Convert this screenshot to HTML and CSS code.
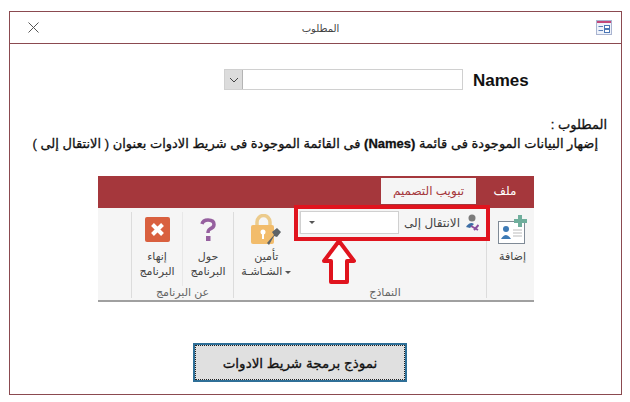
FILE: index.html
```html
<!DOCTYPE html>
<html lang="ar">
<head>
    <meta charset="UTF-8">
    <title>المطلوب</title>
    <link rel="stylesheet" href="styles.css">
</head>
<body>
    <div class="window">
        <div class="title-bar">
            <svg class="close-icon" width="11" height="11" viewBox="0 0 11 11"><path d="M0.5 0.5 L10.5 10.5 M10.5 0.5 L0.5 10.5" stroke="#555" stroke-width="1" fill="none"/></svg>
            <span class="title-text">المطلوب</span>
            <svg class="form-icon" width="16" height="15" viewBox="0 0 16 15">
                <rect x="0.5" y="0.5" width="15" height="14" fill="#eef2fa" stroke="#aab4d0"/>
                <rect x="1" y="1" width="14" height="2" fill="#c2477a"/>
                <path d="M2.5 6.5H7M2.5 10.5H7" stroke="#5b7fb8"/>
                <rect x="8.5" y="5.5" width="5" height="3" fill="#fff" stroke="#4a76b5"/>
                <rect x="8.5" y="9.5" width="5" height="3" fill="#fff" stroke="#4a76b5"/>
            </svg>
        </div>

        <div class="form-body">
            <div class="names-row">
                <div class="combo">
                    <span class="combo-btn"><svg width="10" height="6" viewBox="0 0 10 6"><path d="M1 1 L5 5 L9 1" stroke="#444" fill="none"/></svg></span>
                    <span class="combo-input"></span>
                </div>
                <span class="names-label">Names</span>
            </div>

            <div class="notes" dir="rtl">
                <p class="notes-head">المطلوب :</p>
                <p>إضهار البيانات الموجودة فى قائمة <b>(Names)</b> فى القائمة الموجودة فى شريط الادوات بعنوان ( الانتقال إلى )</p>
            </div>

            <div class="ribbon" dir="rtl">
                <div class="tabs">
                    <span class="tab">ملف</span>
                    <span class="tab tab-active">تبويب التصميم</span>
                </div>
                <div class="panel">
                    <div class="group group-add">
                        <div class="group-items">
                            <div class="tool">
                                <span class="tool-icon">
                                    <svg width="30" height="29" viewBox="0 0 30 29">
                                        <rect x="0.5" y="6.5" width="26" height="22" fill="#fff" stroke="#7f8a96"/>
                                        <circle cx="8" cy="14" r="3" fill="#3d7ab5"/>
                                        <path d="M3 24 q5 -8 10 0z" fill="#3d7ab5"/>
                                        <path d="M15 15H24M15 18H24M15 21H24" stroke="#bbb"/>
                                        <path d="M20 0H24V4H29V8H24V12H20V8H16V4H20Z" fill="#6fae9c"/>
                                    </svg>
                                </span>
                                <span class="tool-label">إضافة</span>
                            </div>
                        </div>
                    </div>
                    <div class="group group-forms">
                        <div class="group-items">
                            <div class="goto">
                                <svg width="14" height="18" viewBox="0 0 14 18">
                                    <circle cx="7" cy="4" r="3.5" fill="#7c7c7c"/>
                                    <path d="M1 13 q4 -6 8 -3 l-4 4z" fill="#3d6ea5"/>
                                    <path d="M6 12 L13 16 M9 16 L13.5 11" stroke="#8a4f9e" stroke-width="2" fill="none"/>
                                </svg>
                                <span class="goto-label">الانتقال إلى</span>
                                <span class="goto-box"><span class="caret"></span></span>
                            </div>
                            <div class="tool tool-lock">
                                <span class="tool-icon">
                                    <svg width="32" height="31" viewBox="0 0 32 31">
                                        <path d="M7 12 V8 a6.500 6.500 0 0 1 13 0 V12" stroke="#eccb8c" stroke-width="3.500" fill="none"/>
                                        <rect x="1" y="11" width="23" height="19" rx="2" fill="#f2bc6b"/>
                                        <circle cx="13" cy="18" r="2.500" fill="#fff"/>
                                        <rect x="12" y="19" width="2" height="6" fill="#fff"/>
                                        <path d="M17 29 L24 21 L22 18 L27 14 L31 18 L27 23 L24 22 L19 31Z" fill="#5f6468"/>
                                    </svg>
                                </span>
                                <span class="tool-label">تأمين<br><span class="tiny-caret"></span> الشـاشـة</span>
                            </div>
                        </div>
                        <div class="group-name group-name-forms">النماذج</div>
                    </div>
                    <div class="group group-about">
                        <div class="group-items">
                            <div class="tool tool-help">
                                <span class="tool-icon">
                                    <svg width="16" height="23" viewBox="0 0 16 23">
                                        <path d="M2 6 q1 -4 6 -4 q6 0 6 4.500 q0 3 -4 4.500 q-2 1 -2 4" stroke="#96609f" stroke-width="3.500" fill="none"/>
                                        <rect x="6" y="18" width="4.500" height="5" fill="#96609f"/>
                                    </svg>
                                </span>
                                <span class="tool-label">حول<br>البرنامج</span>
                            </div>
                            <div class="tool tool-exit">
                                <span class="tool-icon">
                                    <svg width="25" height="25" viewBox="0 0 25 25">
                                        <rect width="25" height="25" rx="2" fill="#d9603f"/>
                                        <path d="M7.500 7.500 L17.500 17.500 M17.500 7.500 L7.500 17.500" stroke="#fff" stroke-width="4"/>
                                    </svg>
                                </span>
                                <span class="tool-label">إنهاء<br>البرنامج</span>
                            </div>
                        </div>
                        <div class="group-name">عن البرنامج</div>
                    </div>
                </div>
                <div class="highlight"></div>
                <svg class="arrow" width="36" height="48" viewBox="0 0 36 48">
                    <path d="M18 4 L33 24 H26 V45 H10 V24 H3 Z" fill="#fff" stroke="#e0141e" stroke-width="4" stroke-linejoin="round"/>
                </svg>
            </div>

            <div class="action-row">
                <button class="action-button">نموذج برمجة شريط الادوات</button>
            </div>
        </div>
    </div>
</body>
</html>
```

FILE: styles.css
```css
body {
    margin: 0;
    background-color: #fff;
    font-family: "Liberation Sans", "DejaVu Sans", sans-serif;
    color: #111;
}
.window {
    box-sizing: border-box;
    width: 613px;
    height: 384px;
    margin: 11px 0 0 9px;
    border: 1px solid #8b4a50;
    display: flex;
    flex-direction: column;
}
.title-bar {
    height: 31px;
    flex: none;
    border-bottom: 1px solid #8b4a50;
    display: flex;
    align-items: center;
    justify-content: space-between;
    padding: 0 9px 0 18px;
}
.title-text {
    font-size: 10px;
    color: #444;
    margin: 2px 0 0 6px;
}
.form-body {
    flex: 1;
    display: flex;
    flex-direction: column;
}
.names-row {
    display: flex;
    align-items: center;
    margin: 25px 0 0 214px;
    height: 21px;
}
.combo {
    width: 239px;
    height: 21px;
    box-sizing: border-box;
    border: 1px solid #d0d0d0;
    display: flex;
}
.combo-btn {
    width: 17px;
    background-color: #dcdcdc;
    border-right: 1px solid #b4b4b4;
    display: flex;
    align-items: center;
    justify-content: center;
}
.names-label {
    margin: 3px 0 0 10px;
    font-size: 17px;
    font-weight: bold;
}
.notes {
    margin: 25px 23px 0 0;
    font-size: 13px;
    -webkit-text-stroke: 0.3px #111;
    line-height: 19px;
}
.notes p {
    margin: 0;
}
.notes .notes-head {
    margin-right: -9px;
}
.ribbon {
    position: relative;
    width: 436px;
    height: 126px;
    margin: 23px 0 0 88px;
    background-color: #f5f5f5;
    display: flex;
    flex-direction: column;
    font-size: 11px;
    color: #444;
}
.tabs {
    height: 32px;
    flex: none;
    background-color: #a5373c;
    display: flex;
    padding-top: 2px;
    box-sizing: border-box;
    font-size: 12px;
}
.tab {
    width: 58px;
    text-align: center;
    line-height: 26px;
    color: #fff;
}
.tab-active {
    width: 95px;
    height: 26px;
    background-color: #f5f5f5;
    color: #a5373c;
}
.panel {
    flex: 1;
    display: flex;
    border-bottom: 2px solid #a0a0a0;
}
.group {
    display: flex;
    flex-direction: column;
    box-sizing: border-box;
    border-left: 1px solid #dcdcdc;
    margin: 4px 0 2px;
}
.group-items {
    flex: 1;
    display: flex;
}
.group-name {
    text-align: center;
    color: #666;
    line-height: 12px;
}
.group-name-forms {
    padding-left: 50px;
}
.group-add {
    width: 48px;
}
.group-forms {
    width: 253px;
}
.group-about {
    width: 102px;
}
.tool {
    display: flex;
    flex-direction: column;
    align-items: center;
    text-align: center;
    line-height: 15px;
    white-space: nowrap;
}
.tool-icon {
    height: 34px;
    display: flex;
    align-items: center;
    justify-content: center;
}
.tool-label {
    margin-top: 3px;
}
.group-add .tool {
    width: 48px;
    padding-left: 4px;
    box-sizing: border-box;
}
.tool-lock {
    width: 65px;
}
.tool-help {
    width: 51px;
    border-left: 1px solid #e8e8e8;
    box-sizing: border-box;
}
.tool-exit {
    width: 50px;
}
.tiny-caret,
.caret {
    display: inline-block;
    width: 0;
    height: 0;
    border-left: 3px solid transparent;
    border-right: 3px solid transparent;
    border-top: 3px solid #555;
}
.tiny-caret {
    vertical-align: middle;
}
.goto {
    box-sizing: border-box;
    width: 188px;
    height: 23px;
    margin-top: -1px;
    padding-right: 7px;
    display: flex;
    align-items: center;
    border-left: 1px solid #e4e4e4;
}
.goto-label {
    margin: 0 5px;
    font-size: 12px;
    white-space: nowrap;
}
.goto-box {
    flex: 1;
    height: 23px;
    box-sizing: border-box;
    background-color: #fff;
    border: 1px solid #d0d0d0;
    display: flex;
    align-items: center;
    justify-content: flex-end;
    padding-left: 8px;
}
.highlight {
    position: absolute;
    left: 196px;
    top: 29px;
    width: 188px;
    height: 28px;
    border: 4px solid #e0141e;
}
.arrow {
    position: absolute;
    left: 223px;
    top: 61px;
}
.action-row {
    margin: 41px 0 0 183px;
}
.action-button {
    width: 214px;
    height: 39px;
    background-color: #e0e0e0;
    border: 2px solid #2f6f97;
    outline: 1px dotted #222;
    outline-offset: -3px;
    font-family: "Liberation Sans", "DejaVu Sans", sans-serif;
    font-size: 13.5px;
    -webkit-text-stroke: 0.3px #111;
    color: #111;
}
```
